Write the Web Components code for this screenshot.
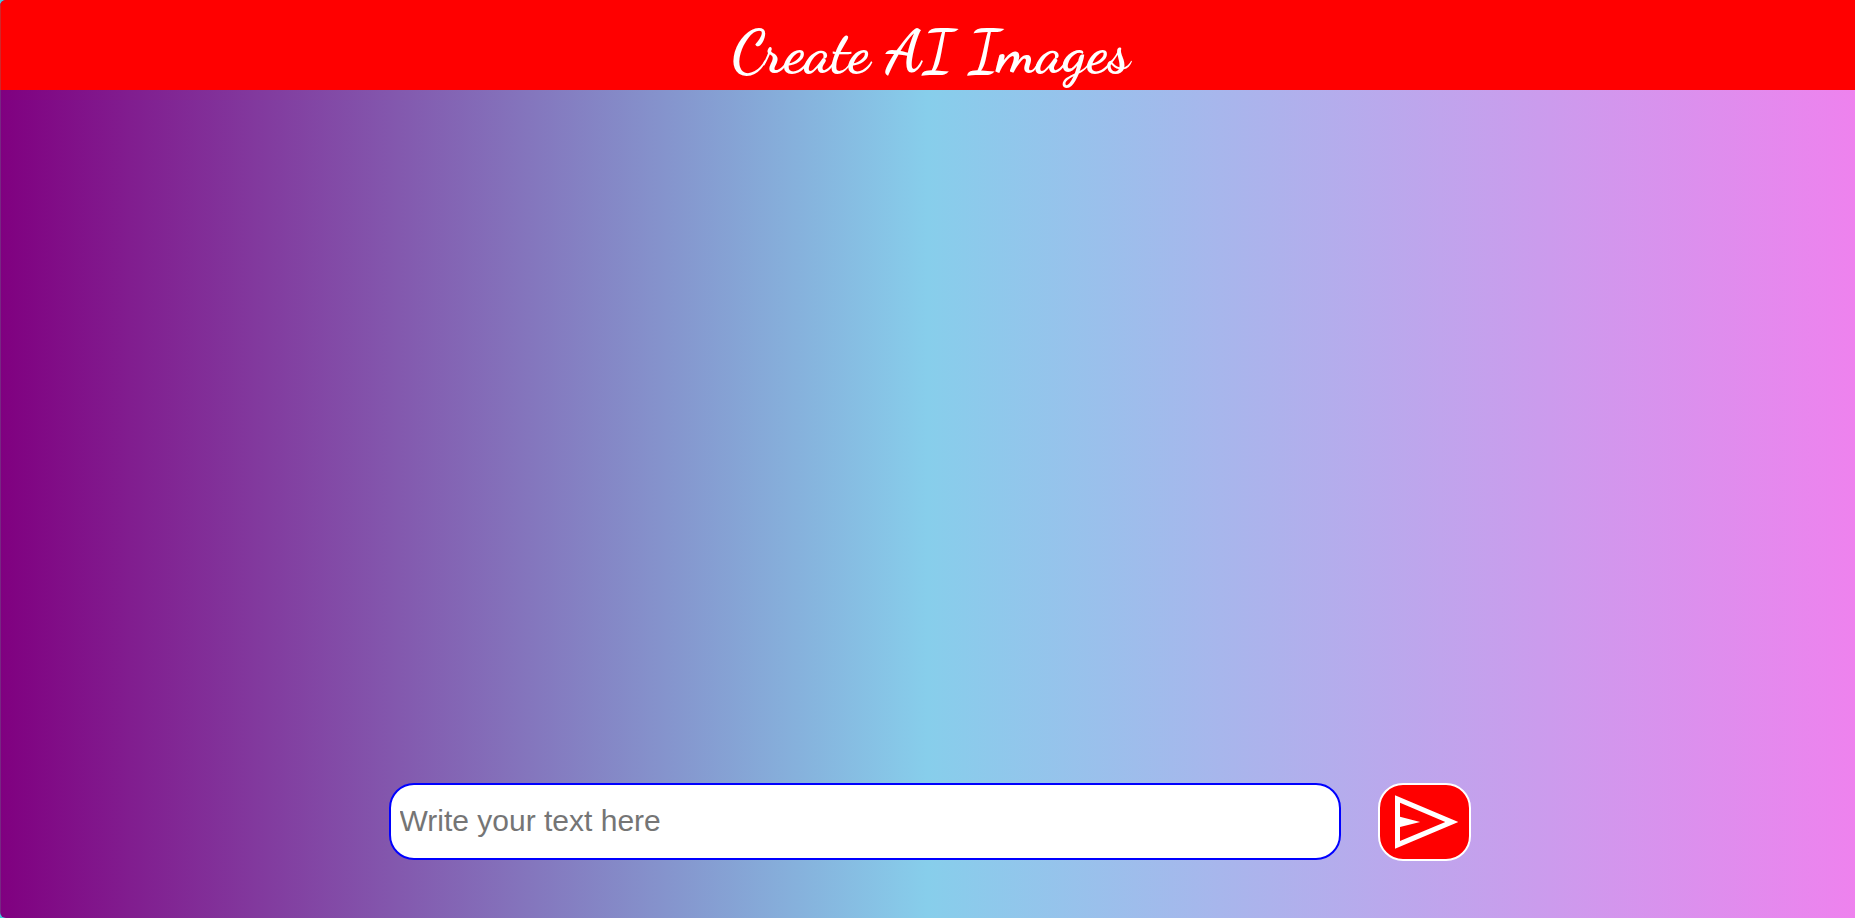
<!DOCTYPE html>
<html lang="en">
<head>
<meta charset="utf-8">
<title>Create AI Images</title>
<style>
html, body { margin: 0; height: 100%; background: #45cbdc; }
</style>
</head>
<body>
<image-app>
  <app-header>Create AI Images</app-header>
  <prompt-bar placeholder="Write your text here"></prompt-bar>
</image-app>
<script>
class ImageApp extends HTMLElement {
  constructor() {
    super();
    this.attachShadow({ mode: "open" }).innerHTML = `
      <style>
        :host {
          display: flex; flex-direction: column; justify-content: space-between;
          position: relative; box-sizing: border-box; min-height: 100vh; overflow: hidden;
          border-radius: 6px 0 0 6px;
          background: linear-gradient(90deg, purple, skyblue, violet);
        }
        /* thin window edge over the header and the backdrop */
        :host::after {
          content: ""; position: absolute; inset: 0 auto 0 0; width: 1px;
          background: rgb(100 130 140 / 0.3);
        }
      </style>
      <slot></slot>`;
  }
}
class AppHeader extends HTMLElement {
  constructor() {
    super();
    this.attachShadow({ mode: "open" }).innerHTML = `
      <style>
        :host { display: block; background: red; color: white; }
        h1 {
          margin: 0; box-sizing: border-box; padding: 16px 0 2px 6px;
          text-align: center; white-space: nowrap;
          font: 700 60px/72px "Dancing Script", cursive;
        }
      </style>
      <h1><slot></slot></h1>`;
  }
}
class SendButton extends HTMLElement {
  constructor() {
    super();
    this.attachShadow({ mode: "open" }).innerHTML = `
      <style>
        :host { display: block; }
        button {
          display: grid; place-content: center; box-sizing: border-box;
          width: 93px; height: 78px; padding: 0; overflow: hidden;
          border: 2px solid white; border-radius: 25px; background: red; color: white; cursor: pointer;
        }
        svg { width: 80px; height: 80px; fill: currentColor; }
      </style>
      <button type="submit" aria-label="Generate">
        <svg viewBox="0 -960 960 960" aria-hidden="true"><path d="M120-160v-640l760 320-760 320Zm60-93 544-227-544-230v168l242 62-242 60v167Z"/></svg>
      </button>`;
  }
}
class PromptBar extends HTMLElement {
  constructor() {
    super();
    this.attachShadow({ mode: "open" }).innerHTML = `
      <style>
        :host { display: block; padding: 0 calc(21% - 6px) 57px calc(21% - 1px); }
        .bar { display: flex; gap: 37px; align-items: flex-start; }
        input {
          flex: 1; min-width: 0; box-sizing: border-box; height: 77px; margin: 0; padding: 0 9px 2px;
          border: 2px solid blue; border-radius: 25px; background: white; color: black;
          font: 30px "Liberation Sans", Arial, sans-serif;
        }
        input::placeholder { color: #757575; }
      </style>
      <div class="bar">
        <input type="text" aria-label="Image description">
        <send-button></send-button>
      </div>`;
    this.shadowRoot.querySelector("input").placeholder = this.getAttribute("placeholder") || "";
  }
}
customElements.define("image-app", ImageApp);
customElements.define("app-header", AppHeader);
customElements.define("send-button", SendButton);
customElements.define("prompt-bar", PromptBar);
</script>
</body>
</html>
